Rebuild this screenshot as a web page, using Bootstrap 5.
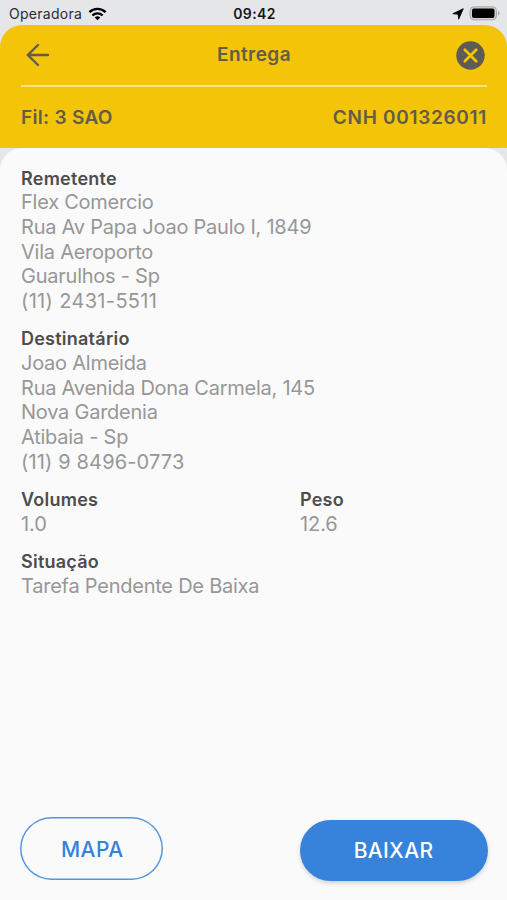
<!DOCTYPE html>
<html lang="pt-BR">
<head>
<meta charset="utf-8">
<meta name="viewport" content="width=device-width, initial-scale=1">
<title>Entrega</title>
<link href="https://cdn.jsdelivr.net/npm/bootstrap@5.3.0/dist/css/bootstrap.min.css" rel="stylesheet">
<style>
body { font-family: Inter, "Liberation Sans", sans-serif; background: #e5e6e8; height: 900px; overflow: hidden; }
.status { height: 25px; font-size: 14px; line-height: 25px; color: #2b2c2e; padding: 2px 7px 0 9px; }
.st-op { letter-spacing: .28px; }
.wifi { margin-left: 5.5px; }
.status .clock { color: #161617; letter-spacing: .35px; }
.battery { margin-left: 5px; }
.side { flex: 1 1 0; }
.top-area { background: #f4c409; color: #625c4b; border-radius: 22px 22px 0 0; height: 122.5px; padding: 0 20px 0 21px; font-size: 19px; line-height: 24px; }
.title-row { height: 62px; border-bottom: 2px solid #fbe383; padding: 0 2px 0 5px; }
.info-row { height: 61px; }
.t-title { letter-spacing: .45px; padding-left: 2px; }
.t-fil { letter-spacing: .3px; }
.t-cnh { letter-spacing: .69px; }
.sheet { background: #fafafa; border-radius: 22px 22px 0 0; padding: 19px 19.5px 19px 21px; }
.field-label { font-size: 18px; line-height: 23.5px; font-weight: 600; letter-spacing: .24px; color: #4d4d4d; }
.field-text { font-size: 20px; line-height: 24.75px; letter-spacing: -.24px; color: #979797; white-space: nowrap; }
.num { letter-spacing: -.1px; }
.phone { letter-spacing: .34px; }
.phone-long { letter-spacing: .15px; }
.field-block { margin-bottom: 13.7px; }
.second-col { width: 187.5px; }
.pill { height: 63px; font-size: 21px; font-weight: 500; }
.pill-map { width: 143px; border: 0; box-shadow: inset 0 0 0 1.5px #5596e2; color: #3681da; margin-left: -1px; letter-spacing: .4px; margin-bottom: 1px; }
.pill-map span { display: block; padding: 2px 0 0 1.5px; }
.pill-down { width: 188px; height: 61px; background: #3783dc; color: #fff; box-shadow: 0 2px 4px rgba(0,0,0,.17); letter-spacing: .35px; }
</style>
</head>
<body class="d-flex flex-column">
<div class="status d-flex align-items-center">
  <div class="side d-flex align-items-center"><span class="st-op">Operadora</span>
    <svg class="wifi" width="19" height="14" viewBox="-.5 0 19 14"><g fill="none" stroke="#000" stroke-width="2.4"><path d="M.9 5.2a11.6 11.6 0 0 1 16.2 0"/><path d="M3.9 8.5a7.2 7.2 0 0 1 10.2 0"/></g><path d="M9 13.2 6.2 10.5a4 4 0 0 1 5.6 0z"/></svg>
  </div>
  <span class="clock fw-semibold">09:42</span>
  <div class="side d-flex align-items-center justify-content-end">
    <svg width="12" height="12" viewBox="0 0 12 12"><path d="M11.3.7 6.7 11.2 6.1 6.3.8 5.7z" stroke="#000" stroke-width=".8" stroke-linejoin="round"/></svg>
    <svg class="battery" width="31" height="15" viewBox="0 0 31 15"><rect x="1" y=".8" width="26.5" height="13" rx="3.8" fill="#d0d0d1" stroke="#a7a8aa" stroke-width="1"/><rect x="3" y="2.6" width="22.5" height="9.4" rx="2"/><path d="M29 5v4.6q1.5-.8 1.5-2.3T29 5z" fill="#a7a8aa"/></svg>
  </div>
</div>
<header class="top-area fw-semibold flex-shrink-0">
  <div class="title-row d-flex align-items-center justify-content-between">
    <svg width="24" height="24" viewBox="0 0 24 24" fill="none" stroke="#625c4b" stroke-width="2.4" stroke-linecap="round" stroke-linejoin="round"><path d="M22 12H1.8M12 2 1.8 12 12 22"/></svg>
    <span class="t-title">Entrega</span>
    <svg width="29" height="29" viewBox="0 0 29 29"><circle cx="14.5" cy="14.5" r="14.2" fill="#5d5b55"/><path d="m8.8 8.8 11.4 11.4m0-11.4L8.8 20.2" stroke="#f4c409" stroke-width="2.7" stroke-linecap="round"/></svg>
  </div>
  <div class="info-row d-flex align-items-center justify-content-between"><span class="t-fil">Fil: 3 SAO</span><span class="t-cnh">CNH 001326011</span></div>
</header>
<main class="sheet flex-grow-1 d-flex flex-column">
  <section class="field-block">
    <div class="field-label">Remetente</div>
    <div class="field-text">Flex Comercio</div>
    <div class="field-text">Rua Av Papa Joao Paulo I, 1849</div>
    <div class="field-text">Vila Aeroporto</div>
    <div class="field-text">Guarulhos - Sp</div>
    <div class="field-text phone">(11) 2431-5511</div>
  </section>
  <section class="field-block">
    <div class="field-label">Destinatário</div>
    <div class="field-text">Joao Almeida</div>
    <div class="field-text">Rua Avenida Dona Carmela, 145</div>
    <div class="field-text">Nova Gardenia</div>
    <div class="field-text">Atibaia - Sp</div>
    <div class="field-text phone-long">(11) 9 8496-0773</div>
  </section>
  <section class="field-block d-flex justify-content-between">
    <div><div class="field-label">Volumes</div><div class="field-text num">1.0</div></div>
    <div class="second-col"><div class="field-label">Peso</div><div class="field-text num">12.6</div></div>
  </section>
  <section>
    <div class="field-label">Situação</div>
    <div class="field-text">Tarefa Pendente De Baixa</div>
  </section>
  <div class="d-flex justify-content-between align-items-end mt-auto">
    <button type="button" class="btn rounded-pill p-0 pill pill-map"><span>MAPA</span></button>
    <button type="button" class="btn rounded-pill p-0 border-0 pill pill-down">BAIXAR</button>
  </div>
</main>
<script src="https://cdn.jsdelivr.net/npm/bootstrap@5.3.0/dist/js/bootstrap.bundle.min.js"></script>
</body>
</html>
